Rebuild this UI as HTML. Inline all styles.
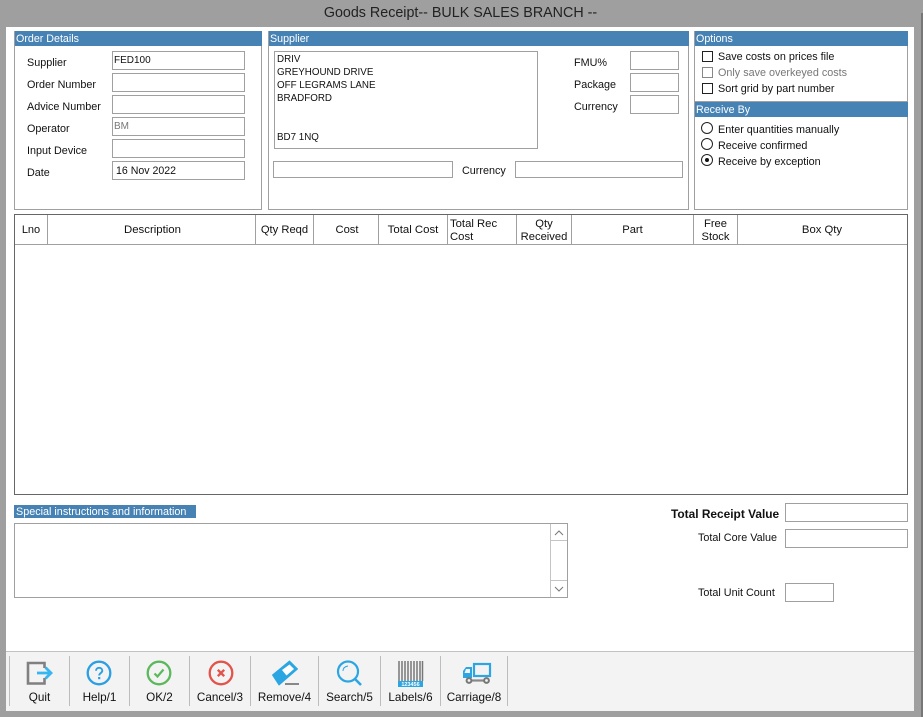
<!DOCTYPE html>
<html><head><meta charset="utf-8"><title>Goods Receipt</title>
<style>
html,body{margin:0;padding:0}
body{width:923px;height:717px;overflow:hidden;background:#9f9f9f;position:relative;font:10.8px "Liberation Sans",sans-serif;color:#111}
div,span.t{position:absolute;box-sizing:border-box;white-space:nowrap}
.p{border:1px solid #a0a0a0;background:#fff}
.h{background:#4682b4;color:#fff;height:15px;line-height:14px;padding:1px 0 0 1px;font-size:10.7px}
.i{border:1px solid #a0a0a0;background:#fff;line-height:16px;padding:1px 0 0 1px}
.l{line-height:14px;height:14px;margin-top:1px}
.a{line-height:14px;height:14px;margin-top:1px;font-size:9.8px}
.c{text-align:center;line-height:13px;color:#111;height:29px;top:216px;display:flex;align-items:center;justify-content:center;font-size:11.6px}
.v{width:1px;background:#a0a0a0}
.cb{width:11px;height:11px;border:1px solid #222;left:702px}
.r{width:12px;height:12px;border:1px solid #222;border-radius:50%;left:701px}
.b{top:691px;text-align:center;line-height:14px;height:14px;font-size:11.7px}
.s{top:656px;height:50px;width:1px;background:#bdbdbd}
svg{position:absolute;overflow:visible}
</style></head><body>
<div style="left:0;top:4px;width:921px;text-align:center;font-size:14.3px;line-height:18px;color:#222">Goods Receipt-- BULK SALES BRANCH --</div>
<div style="left:921px;top:13px;width:2px;height:704px;background:#777"></div>
<div style="left:6px;top:27px;width:908px;height:684px;background:#fff"></div>

<div class="p" style="left:14px;top:31px;width:248px;height:179px"></div>
<div class="h" style="left:15px;top:31px;width:247px">Order Details</div>
<div class="l" style="left:27px;top:55px">Supplier</div>
<div class="l" style="left:27px;top:77px">Order Number</div>
<div class="l" style="left:27px;top:99px">Advice Number</div>
<div class="l" style="left:27px;top:121px">Operator</div>
<div class="l" style="left:27px;top:143px">Input Device</div>
<div class="l" style="left:27px;top:165px">Date</div>
<div class="i" style="left:112px;top:51px;width:133px;height:19px;font-size:10px">FED100</div>
<div class="i" style="left:112px;top:73px;width:133px;height:19px"></div>
<div class="i" style="left:112px;top:95px;width:133px;height:19px"></div>
<div class="i" style="left:112px;top:117px;width:133px;height:19px;color:#777;font-size:10px">BM</div>
<div class="i" style="left:112px;top:139px;width:133px;height:19px"></div>
<div class="i" style="left:112px;top:161px;width:133px;height:19px;padding-left:3px;font-size:10.6px">16 Nov 2022</div>

<div class="p" style="left:268px;top:31px;width:421px;height:179px"></div>
<div class="h" style="left:269px;top:31px;width:420px">Supplier</div>
<div class="i" style="left:274px;top:51px;width:264px;height:98px"></div>
<div class="a" style="left:277px;top:52px">DRIV</div>
<div class="a" style="left:277px;top:65px">GREYHOUND DRIVE</div>
<div class="a" style="left:277px;top:78px">OFF LEGRAMS LANE</div>
<div class="a" style="left:277px;top:91px">BRADFORD</div>
<div class="a" style="left:277px;top:130px">BD7 1NQ</div>
<div class="l" style="left:574px;top:55px">FMU%</div>
<div class="l" style="left:574px;top:77px">Package</div>
<div class="l" style="left:574px;top:99px">Currency</div>
<div class="i" style="left:630px;top:51px;width:49px;height:19px"></div>
<div class="i" style="left:630px;top:73px;width:49px;height:19px"></div>
<div class="i" style="left:630px;top:95px;width:49px;height:19px"></div>
<div class="i" style="left:273px;top:161px;width:180px;height:17px"></div>
<div class="l" style="left:462px;top:163px">Currency</div>
<div class="i" style="left:515px;top:161px;width:168px;height:17px"></div>

<div class="p" style="left:694px;top:31px;width:214px;height:179px"></div>
<div class="h" style="left:695px;top:31px;width:213px">Options</div>
<div class="cb" style="top:51px"></div><div class="l" style="left:718px;top:49px">Save costs on prices file</div>
<div class="cb" style="top:67px;border-color:#888"></div><div class="l" style="left:718px;top:65px;color:#777">Only save overkeyed costs</div>
<div class="cb" style="top:83px"></div><div class="l" style="left:718px;top:81px">Sort grid by part number</div>
<div style="left:695px;top:101px;width:213px;height:1px;background:#a0a0a0"></div>
<div class="h" style="left:695px;top:102px;width:213px">Receive By</div>
<div class="r" style="top:122px"></div><div class="l" style="left:718px;top:122px">Enter quantities manually</div>
<div class="r" style="top:138px"></div><div class="l" style="left:718px;top:138px">Receive confirmed</div>
<div class="r" style="top:154px"></div><div style="left:705px;top:158px;width:4px;height:4px;border-radius:50%;background:#111"></div><div class="l" style="left:718px;top:154px">Receive by exception</div>

<div style="left:14px;top:214px;width:894px;height:281px;border:1px solid #666;background:#fff"></div>
<div style="left:15px;top:244px;width:892px;height:1px;background:#a0a0a0"></div>
<div class="v" style="left:47px;top:215px;height:29px"></div>
<div class="v" style="left:255px;top:215px;height:29px"></div>
<div class="v" style="left:313px;top:215px;height:29px"></div>
<div class="v" style="left:378px;top:215px;height:29px"></div>
<div class="v" style="left:447px;top:215px;height:29px"></div>
<div class="v" style="left:516px;top:215px;height:29px"></div>
<div class="v" style="left:571px;top:215px;height:29px"></div>
<div class="v" style="left:693px;top:215px;height:29px"></div>
<div class="v" style="left:737px;top:215px;height:29px"></div>
<div class="c" style="left:15px;width:32px;font-size:11px">Lno</div>
<div class="c" style="left:48px;width:209px;font-size:11.4px">Description</div>
<div class="c" style="left:256px;width:57px;font-size:11.2px">Qty Reqd</div>
<div class="c" style="left:314px;width:66px;font-size:11.2px">Cost</div>
<div class="c" style="left:379px;width:68px;font-size:11.4px">Total Cost</div>
<div class="c" style="left:450px;width:66px;justify-content:flex-start;text-align:left;font-size:11.3px">Total Rec<br>Cost</div>
<div class="c" style="left:517px;width:54px;font-size:11.2px">Qty<br>Received</div>
<div class="c" style="left:572px;width:121px;font-size:11.2px">Part</div>
<div class="c" style="left:694px;width:43px;font-size:11.2px">Free<br>Stock</div>
<div class="c" style="left:738px;width:168px;font-size:11.3px">Box Qty</div>

<div style="left:14px;top:505px;width:182px;height:13px;background:#4682b4;color:#fff;line-height:14px;padding:0 0 0 2px">Special instructions and information</div>
<div class="i" style="left:14px;top:523px;width:554px;height:75px"></div>
<div style="left:550px;top:524px;width:17px;height:73px;border-left:1px solid #c4c4c4;background:#fff"></div>
<div style="left:551px;top:540px;width:16px;height:1px;background:#c4c4c4"></div>
<div style="left:551px;top:580px;width:16px;height:1px;background:#c4c4c4"></div>
<svg style="left:554px;top:530px" width="10" height="6"><path d="M1 5L5 1L9 5" fill="none" stroke="#777" stroke-width="1"/></svg>
<svg style="left:554px;top:586px" width="10" height="6"><path d="M1 1L5 5L9 1" fill="none" stroke="#777" stroke-width="1"/></svg>

<div class="l" style="left:671px;top:506px;font-weight:bold;font-size:11.9px">Total Receipt Value</div>
<div class="i" style="left:785px;top:503px;width:123px;height:19px"></div>
<div class="l" style="left:698px;top:530px">Total Core Value</div>
<div class="i" style="left:785px;top:529px;width:123px;height:19px"></div>
<div class="l" style="left:698px;top:585px">Total Unit Count</div>
<div class="i" style="left:785px;top:583px;width:49px;height:19px"></div>

<div style="left:6px;top:651px;width:908px;height:60px;background:#f3f3f3;border-top:1px solid #c2c2c2"></div>
<div class="s" style="left:9px"></div><div class="s" style="left:69px"></div><div class="s" style="left:129px"></div><div class="s" style="left:189px"></div><div class="s" style="left:250px"></div><div class="s" style="left:318px"></div><div class="s" style="left:380px"></div><div class="s" style="left:440px"></div><div class="s" style="left:507px"></div>

<svg style="left:0;top:0" width="923" height="717">
<path d="M44.5 668V663H28V683.5H44.5V678" fill="none" stroke="#808080" stroke-width="2.6"/>
<path d="M37 673H50M45.5 667.5L51 673L45.5 678.5" fill="none" stroke="#38b6f1" stroke-width="2.8"/>
<circle cx="99" cy="673" r="11.3" fill="none" stroke="#2a9fe3" stroke-width="2.3"/>
<path d="M96 670.8C96 666.8 102.3 666.8 102.3 670.8C102.3 673 99.2 673 99.2 675.5" fill="none" stroke="#2a9fe3" stroke-width="1.9"/><rect x="98.1" y="677" width="2.2" height="2.2" fill="#2a9fe3"/>
<circle cx="159" cy="673" r="11.3" fill="none" stroke="#5cb85c" stroke-width="2.3"/>
<path d="M154.5 673.5L157.5 676.5L163.5 669.5" fill="none" stroke="#5cb85c" stroke-width="2.2"/>
<circle cx="221" cy="673" r="11.3" fill="none" stroke="#e2534b" stroke-width="2.3"/>
<path d="M217.8 669.8L224.2 676.2M224.2 669.8L217.8 676.2" fill="none" stroke="#e2534b" stroke-width="2.4"/>
<path d="M272.5 675L289.5 661L297.5 669L279 685Z" fill="#2ba6e2" stroke="#2ba6e2" stroke-width="1" stroke-linejoin="round"/>
<path d="M282 670L289.5 664.5L294 669L286.5 675.5Z" fill="#fff"/>
<rect x="285" y="683" width="14" height="2" fill="#888"/>
<circle cx="348" cy="671.5" r="10" fill="none" stroke="#2ba6e2" stroke-width="2.2"/>
<path d="M343 671C343 668 345 666.5 348 666" fill="none" stroke="#2ba6e2" stroke-width="1"/>
<path d="M355 679L361 685" stroke="#2ba6e2" stroke-width="2.6"/>
<path d="M399 661V681M402 661V681M405 661V681M408 661V681M411 661V681M414 661V681M417 661V681M420 661V681M422.5 661V681" stroke="#777" stroke-width="1.5"/>
<rect x="398" y="681" width="25" height="6" fill="#2ba6e2"/>
<text x="410.5" y="686" font-size="5.5" font-weight="bold" fill="#fff" text-anchor="middle" font-family="Liberation Sans">123456</text>
<rect x="474" y="664" width="16" height="12" fill="#f3f3f3" stroke="#2ba6e2" stroke-width="2.2"/>
<path d="M463 678V671L466 667H472V678Z" fill="#2ba6e2"/>
<path d="M466 669H470V673H464.5Z" fill="#f3f3f3"/>
<path d="M472 680.5H484" stroke="#888" stroke-width="2.2"/>
<circle cx="469" cy="680.5" r="2.4" fill="#f3f3f3" stroke="#777" stroke-width="2"/>
<circle cx="486.5" cy="680.5" r="2.4" fill="#f3f3f3" stroke="#777" stroke-width="2"/>
</svg>

<div class="b" style="left:10px;width:59px">Quit</div>
<div class="b" style="left:70px;width:59px">Help/1</div>
<div class="b" style="left:130px;width:59px">OK/2</div>
<div class="b" style="left:190px;width:60px">Cancel/3</div>
<div class="b" style="left:251px;width:67px">Remove/4</div>
<div class="b" style="left:319px;width:61px">Search/5</div>
<div class="b" style="left:381px;width:59px">Labels/6</div>
<div class="b" style="left:441px;width:66px">Carriage/8</div>
</body></html>
